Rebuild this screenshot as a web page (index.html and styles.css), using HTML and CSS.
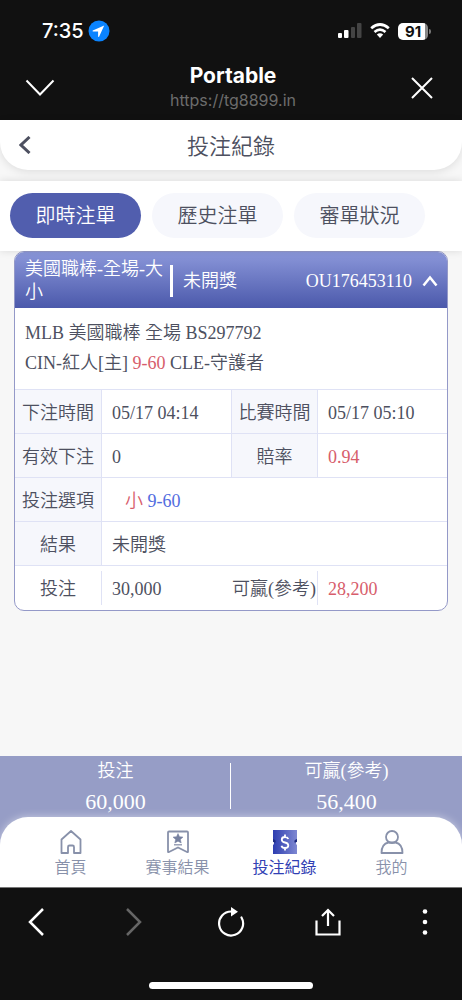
FILE: index.html
```html
<!DOCTYPE html>
<html lang="zh-Hant">
<head>
<meta charset="utf-8">
<meta name="viewport" content="width=device-width, initial-scale=1">
<title>投注紀錄</title>
<link rel="stylesheet" href="styles.css">
</head>
<body>
<div class="screen">
  <div class="chrome">
    <div class="status">
      <div class="status-left">
        <span class="clock">7:35</span>
        <svg width="22" height="22" viewBox="0 0 22 22"><circle cx="11" cy="11" r="10.5" fill="#0a84ff"/><path d="M16.2 5.6 4.8 10.5q-.7.5.1.9h5.2v5.2q.5.8 1 .1z" fill="#fff"/></svg>
      </div>
      <div class="status-right">
        <svg width="24" height="16" viewBox="0 0 24 16"><rect x="0" y="10" width="4" height="5" rx="1" fill="#fff"/><rect x="6" y="7" width="4.5" height="8" rx="1" fill="#fff"/><rect x="13" y="4" width="4" height="11" rx="1" fill="#444"/><rect x="19" y="0" width="4.500" height="15" rx="1" fill="#444"/></svg>
        <svg width="20" height="16" viewBox="0 0 20 16" fill="none" stroke="#fff" stroke-width="2.700"><path d="M1.200 5.300Q10-2.300 18.800 5.300M4.500 9Q10 4.300 15.500 9"/><path d="M6.800 11.600Q10 9 13.200 11.600L10 15z" fill="#fff" stroke="none"/></svg>
        <span class="battery">91</span>
      </div>
    </div>
    <div class="browser-bar">
      <button class="icon-btn" aria-label="收合"><svg width="30" height="18" viewBox="0 0 30 18" fill="none" stroke="#fff" stroke-width="2"><path d="M1.500 1.500 15 15.500 28.500 1.500"/></svg></button>
      <div class="site">
        <div class="site-name">Portable</div>
        <div class="site-url">https://tg8899.in</div>
      </div>
      <button class="icon-btn" aria-label="關閉"><svg width="22" height="22" viewBox="0 0 22 22" fill="none" stroke="#fff" stroke-width="2"><path d="M1 1 21 21M21 1 1 21"/></svg></button>
    </div>
  </div>

  <header class="page-head">
    <button class="icon-btn" aria-label="返回"><svg width="12" height="18" viewBox="0 0 12 18" fill="none" stroke="#4d5060" stroke-width="3"><path d="M10.500 1 2 9 10.500 17"/></svg></button>
    <h1>投注紀錄</h1>
  </header>

  <div class="tabs">
    <button class="tab active">即時注單</button>
    <button class="tab">歷史注單</button>
    <button class="tab">審單狀況</button>
  </div>

  <main>
    <article class="card">
      <div class="card-head">
        <span class="game">美國職棒-全場-大小</span>
        <span class="state">未開獎</span>
        <span class="order">OU176453110</span>
        <button class="icon-btn" aria-label="收合注單"><svg width="16" height="12" viewBox="0 0 16 12" fill="none" stroke="#fff" stroke-width="2.500"><path d="M1.500 10.500 8 2.500 14.500 10.500"/></svg></button>
      </div>
      <div class="match">
        <p>MLB 美國職棒 全場 BS297792</p>
        <p>CIN-紅人[主] <span class="red">9-60</span> CLE-守護者</p>
      </div>
      <table class="details">
        <colgroup><col class="c-label"><col class="c-value"><col class="c-label"><col class="c-value"></colgroup>
        <tbody>
        <tr><th scope="row">下注時間</th><td>05/17 04:14</td><th scope="row">比賽時間</th><td>05/17 05:10</td></tr>
        <tr><th scope="row">有效下注</th><td>0</td><th scope="row">賠率</th><td class="red">0.94</td></tr>
        <tr><th scope="row">投注選項</th><td colspan="3" class="pick"><span class="red">小</span> <span class="blue">9-60</span></td></tr>
        <tr><th scope="row">結果</th><td colspan="3">未開獎</td></tr>
        <tr class="sum"><th scope="row">投注</th><td>30,000</td><th scope="row">可贏(參考)</th><td class="red">28,200</td></tr>
        </tbody>
      </table>
    </article>
  </main>

  <footer class="dock">
    <div class="totals">
      <div class="total"><span>投注</span><strong>60,000</strong></div>
      <div class="total"><span>可贏(參考)</span><strong>56,400</strong></div>
    </div>
    <nav class="nav">
      <a href="#"><svg width="26" height="26" viewBox="0 0 26 26" fill="none" stroke="#8891aa" stroke-width="1.800" stroke-linejoin="round"><path d="M3.500 10.500 13 2l9.500 8.500V24H16v-6q0-1.500-1.500-1.500h-3Q10 16.500 10 18v6H3.500z"/></svg>首頁</a>
      <a href="#"><svg width="26" height="26" viewBox="0 0 26 26"><path d="M4 2.500h18q1 0 1 1V22.500q0 1-1 .5l-9-4.500L4 23q-1 .5-1-.5V3.500q0-1 1-1z" fill="none" stroke="#8891aa" stroke-width="1.800"/><path d="m13 4.500 1.500 3.200 3.500.4-2.600 2.400.8 3.500-3.200-1.800-3.200 1.800.8-3.500L8 8.100l3.500-.4z" fill="#7681a0" stroke="#7681a0" stroke-width=".5"/><path d="M9 15.800h8" stroke="#8891aa" stroke-width="1.300"/></svg>賽事結果</a>
      <a href="#" class="current" aria-current="page"><svg width="26" height="26" viewBox="0 0 26 26"><defs><linearGradient id="ticket"><stop stop-color="#2d3db0"/><stop offset="1" stop-color="#7e88d2"/></linearGradient></defs><path d="M1 1h24v11a2.500 2.500 0 0 0 0 4v9H1v-9a2.500 2.500 0 0 0 0-4z" fill="url(#ticket)"/><path d="M1 10v3a2 2 0 0 1 2 1q2-3-2-4m24 0v3a2 2 0 0 0-2 1q-2-3 2-4" fill="#1d2a80"/><path d="M16.300 10Q15.500 8 13 8 9.800 8 9.800 10.500t3.200 3 3.300 3Q16.300 19 13 19 10 19 9.500 16.800M13 5.500v3m0 10v3" fill="none" stroke="#fff" stroke-width="1.800"/></svg>投注紀錄</a>
      <a href="#"><svg width="26" height="26" viewBox="0 0 26 26" fill="none" stroke="#8891aa" stroke-width="1.800" stroke-linejoin="round"><circle cx="13" cy="8" r="6"/><path d="M2.500 24q0-9 7-10.500h7q7 1.500 7 10.500z"/></svg>我的</a>
    </nav>
  </footer>

  <div class="toolbar">
    <div class="tools">
      <button class="icon-btn" aria-label="上一頁"><svg width="30" height="30" viewBox="0 0 30 30" fill="none" stroke="#fff" stroke-width="2.500"><path d="M21 2 8 15 21 28"/></svg></button>
      <button class="icon-btn" aria-label="下一頁"><svg width="30" height="30" viewBox="0 0 30 30" fill="none" stroke="#666" stroke-width="2.500"><path d="M8 2 21 15 8 28"/></svg></button>
      <button class="icon-btn" aria-label="重新載入"><svg width="30" height="30" viewBox="0 0 30 30"><path d="M25.500 10.500A12 12 0 1 1 15.500 4.500" fill="none" stroke="#fff" stroke-width="2.200" stroke-linecap="round"/><path d="M15 0 22 4.800 15 9.600z" fill="#fff"/></svg></button>
      <button class="icon-btn" aria-label="分享"><svg width="30" height="30" viewBox="0 0 30 30" fill="none" stroke="#fff" stroke-width="2.200"><path d="M3.500 13.500v14h23v-14M15 19V3M9 9l6-6 6 6"/></svg></button>
      <button class="icon-btn" aria-label="更多"><svg width="30" height="30" viewBox="0 0 30 30" fill="#fff"><circle cx="15" cy="4.500" r="2.300"/><circle cx="15" cy="15" r="2.300"/><circle cx="15" cy="25.500" r="2.300"/></svg></button>
    </div>
    <div class="home-bar"></div>
  </div>
</div>
</body>
</html>
```
FILE: styles.css
```css
* { box-sizing: border-box; }
body {
  margin: 0;
  background: #f7f7f7;
  color: #4d5060;
  font-family: "Liberation Serif", "Noto Sans CJK TC", serif;
  font-size: 18px;
  font-weight: 350;
}
button { font: inherit; color: inherit; border: 0; background: none; padding: 0; }
svg { display: block; flex: none; }
h1, p { margin: 0; font-weight: inherit; }
.screen { min-height: 100vh; display: flex; flex-direction: column; }
.icon-btn { display: flex; align-items: center; justify-content: center; }

.chrome { background: #111; color: #fff; height: 120px; font-family: Inter, "Noto Sans CJK TC", sans-serif; }
.status { display: flex; justify-content: space-between; align-items: center; height: 60px; padding: 2px 34px 0 42px; }
.status-left { display: flex; align-items: center; gap: 4px; }
.status-right { display: flex; align-items: center; gap: 8px; }
.clock { font-size: 20px; font-weight: 500; }
.battery {
  position: relative;
  width: 30px;
  height: 17px;
  border-radius: 5px;
  background: linear-gradient(90deg, #fff 90%, #888 90%);
  color: #111;
  font-size: 15px;
  font-weight: 700;
  line-height: 17px;
  text-align: center;
}
.battery::after { content: ""; position: absolute; right: -3px; top: 6px; width: 2px; height: 5px; border-radius: 0 2px 2px 0; background: #777; }
.browser-bar { display: flex; justify-content: space-between; padding: 3px 29px 0 25px; height: 60px; }
.browser-bar .icon-btn { width: 30px; height: 50px; }
.browser-bar .icon-btn:last-child { width: 22px; }
.site { text-align: center; }
.site-name { font-size: 21px; font-weight: 700; line-height: 26px; }
.site-url { font-size: 16px; font-weight: 400; line-height: 22px; color: #6c6c6c; }

.page-head {
  display: grid;
  grid-template-columns: 40px 1fr 40px;
  align-items: center;
  height: 50px;
  padding: 0 5px;
  background: #fff;
  border-radius: 0 0 28px 28px;
  box-shadow: 0 2px 8px rgba(0, 0, 0, .1);
}
.page-head h1 { text-align: center; font-size: 22px; line-height: 32px; padding-top: 4px; }

.tabs {
  position: relative;
  z-index: 1;
  display: flex;
  gap: 11px;
  margin-top: 11px;
  padding: 12px 10px 13px;
  background: #fff;
  box-shadow: 0 0 8px rgba(0, 0, 0, .12);
}
.tab { flex: 0 1 131px; height: 45px; border-radius: 23px; background: #f6f7fc; font-size: 20px; line-height: 30px; }
.tab.active { background: #515eae; color: #fff; }

main { flex: 1; padding: 0 14px; }
.card { background: #fff; border: 1px solid #9499c8; border-radius: 10px; overflow: hidden; }
.card-head {
  display: flex;
  align-items: center;
  height: 56px;
  padding: 2px 9px 0 10px;
  background: linear-gradient(#8b97da, #4b59ab);
  color: #fff;
  line-height: 23px;
}
.game { width: 145px; }
.state { flex: 1; display: flex; align-items: center; gap: 10px; }
.state::before { content: ""; width: 3px; height: 32px; background: #fff; }
.order { margin-right: 10px; }
.match { padding: 10px 10px 11px; line-height: 30px; }
.red { color: #d75d6b; }
.blue { color: #526ce0; }

.details { width: 100%; table-layout: fixed; border-spacing: 0; line-height: 26px; }
.c-label { width: 86px; }
.details th, .details td { height: 44px; padding: 2px 0 0; border-top: 1px solid #dfe2f5; }
.details th { background: #f6f7fc; font-weight: inherit; text-align: center; white-space: nowrap; }
.details td { padding-left: 10px; border-left: 1px solid #dfe2f5; }
.details td + th { border-left: 1px solid #dfe2f5; }
.details .pick { padding-left: 23px; }
.details .sum > * { border-left: 0; height: 45px; }
.details .sum th { background: none; }
.details .sum td { padding-left: 11px; background: linear-gradient(#dfe2f5, #dfe2f5) 0 center / 1px 34px no-repeat; }

.dock { background: #969dc6; }
.totals { display: grid; grid-template-columns: 1fr 1fr; height: 61px; color: #fff; }
.total { display: flex; flex-direction: column; align-items: center; gap: 4px; position: relative; }
.total span { line-height: 30px; }
.total strong { font-size: 22px; font-weight: inherit; line-height: 24px; }
.total + .total::before { content: ""; position: absolute; left: -1px; top: 7px; width: 1px; height: 46px; background: #fff; }
.nav {
  display: grid;
  grid-template-columns: repeat(4, 107px);
  justify-content: center;
  height: 70px;
  padding-top: 12px;
  background: #fff;
  border-radius: 28px 28px 0 0;
  box-shadow: 0 0 8px rgba(255, 255, 255, .5);
}
.nav a { display: flex; flex-direction: column; align-items: center; color: #8891aa; font-size: 16px; line-height: 26px; text-decoration: none; }
.nav a.current { color: #3140b4; font-weight: 400; }

.toolbar { height: 113px; background: #111; border-top: 1px solid #777; display: flex; flex-direction: column; justify-content: space-between; align-items: center; padding: 19px 22px 11px; }
.tools { width: 100%; display: flex; justify-content: space-between; }
.home-bar { width: 164px; height: 7px; border-radius: 4px; background: #fff; }
```
